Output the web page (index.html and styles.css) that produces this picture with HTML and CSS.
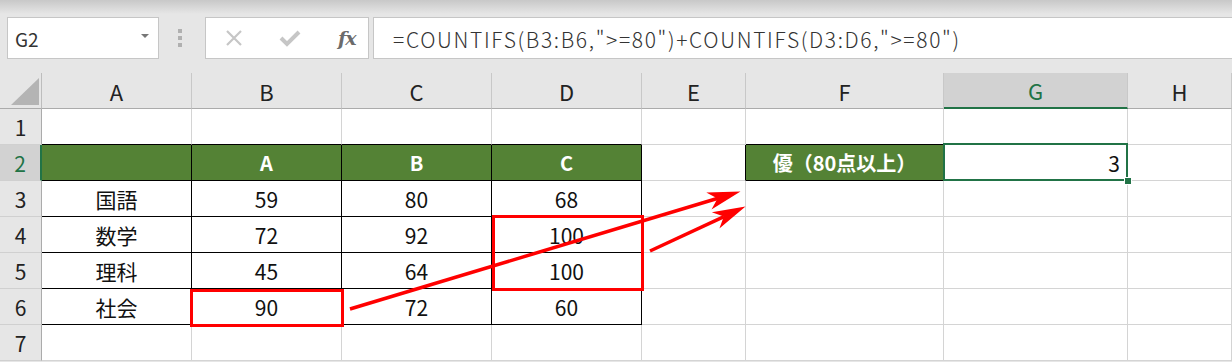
FILE: index.html
```html
<!DOCTYPE html>
<html lang="ja">

<head>
  <meta charset="utf-8">
  <title>COUNTIFS - 80点以上</title>
  <link rel="stylesheet" href="styles.css">
</head>

<body>
  <div class="app">
    <div class="topbar"></div>

    <div class="formula-bar">
      <div class="name-box">
        <span>G2</span>
        <span class="drop"></span>
      </div>
      <div class="grip"><i></i><i></i><i></i></div>
      <div class="fx-box">
        <svg class="ico" width="20" height="20" viewBox="0 0 20 20">
          <path d="M3 3 L17 17 M17 3 L3 17" stroke="#c6c6c6" stroke-width="2.2" fill="none" />
        </svg>
        <svg class="ico" width="22" height="20" viewBox="0 0 22 20">
          <path d="M2 10 L8 16 L20 4" stroke="#c6c6c6" stroke-width="4" fill="none" />
        </svg>
        <span class="fx">fx</span>
      </div>
      <div class="formula">=COUNTIFS(B3:B6,"&gt;=80")+COUNTIFS(D3:D6,"&gt;=80")</div>
    </div>

    <div class="sheet">
      <!-- header row -->
      <div class="corner"><span class="tri"></span></div>
      <div class="ch">A</div>
      <div class="ch">B</div>
      <div class="ch">C</div>
      <div class="ch">D</div>
      <div class="ch">E</div>
      <div class="ch">F</div>
      <div class="ch sel">G</div>
      <div class="ch">H</div>

      <!-- row 1 -->
      <div class="rh">1</div>
      <div class="c top"></div>
      <div class="c top"></div>
      <div class="c top"></div>
      <div class="c top"></div>
      <div class="c"></div>
      <div class="c top"></div>
      <div class="c"></div>
      <div class="c"></div>

      <!-- row 2 -->
      <div class="rh sel">2</div>
      <div class="c tb hd"></div>
      <div class="c tb hd">A</div>
      <div class="c tb hd">B</div>
      <div class="c tb hd">C</div>
      <div class="c left"></div>
      <div class="c tb hd">優（80点以上）</div>
      <div class="c num active">3<span class="handle"></span></div>
      <div class="c"></div>

      <!-- row 3 -->
      <div class="rh">3</div>
      <div class="c tb">国語</div>
      <div class="c tb">59</div>
      <div class="c tb">80</div>
      <div class="c tb">68</div>
      <div class="c"></div>
      <div class="c"></div>
      <div class="c"></div>
      <div class="c"></div>

      <!-- row 4 -->
      <div class="rh">4</div>
      <div class="c tb">数学</div>
      <div class="c tb">72</div>
      <div class="c tb">92</div>
      <div class="c tb">100</div>
      <div class="c"></div>
      <div class="c"></div>
      <div class="c"></div>
      <div class="c"></div>

      <!-- row 5 -->
      <div class="rh">5</div>
      <div class="c tb">理科</div>
      <div class="c tb">45</div>
      <div class="c tb">64</div>
      <div class="c tb">100</div>
      <div class="c"></div>
      <div class="c"></div>
      <div class="c"></div>
      <div class="c"></div>

      <!-- row 6 -->
      <div class="rh">6</div>
      <div class="c tb">社会</div>
      <div class="c tb">90</div>
      <div class="c tb">72</div>
      <div class="c tb">60</div>
      <div class="c"></div>
      <div class="c"></div>
      <div class="c"></div>
      <div class="c"></div>

      <!-- row 7 -->
      <div class="rh">7</div>
      <div class="c"></div>
      <div class="c"></div>
      <div class="c"></div>
      <div class="c"></div>
      <div class="c"></div>
      <div class="c"></div>
      <div class="c"></div>
      <div class="c"></div>
    </div>

    <!-- red annotations drawn over the sheet -->
    <svg class="marks" width="1232" height="362" viewBox="0 0 1232 362">
      <rect x="191.5" y="290.5" width="151" height="35" fill="none" stroke="#ff0000" stroke-width="3" />
      <rect x="493.5" y="216.5" width="149" height="73" fill="none" stroke="#ff0000" stroke-width="3" />

      <line x1="350" y1="309" x2="718" y2="198.3" stroke="#ff0000" stroke-width="3.5" />
      <polygon points="740.5,191.5 711.5,209.6 717.5,198.4 706.3,192.4" fill="#ff0000" />

      <line x1="650" y1="251" x2="724" y2="216.6" stroke="#ff0000" stroke-width="3.5" />
      <polygon points="745.5,206.5 719.4,228.6 723.8,216.6 711.8,212.2" fill="#ff0000" />
    </svg>
  </div>
</body>

</html>
```

FILE: styles.css
```css
* {
  box-sizing: border-box;
}

body {
  margin: 0;
  font-family: "Noto Sans CJK JP", "Noto Sans", sans-serif;
  background-color: #e6e6e6;
}

.app {
  position: relative;
  width: 1232px;
  height: 362px;
  overflow: hidden;
}

.topbar {
  height: 14px;
  background: linear-gradient(#c8c8c8, #e6e6e6);
}

/* formula bar */

.formula-bar {
  display: flex;
  align-items: stretch;
  height: 42px;
  margin-top: 3px;
  margin-bottom: 14px;
  padding-left: 7px;
}

.name-box {
  display: flex;
  align-items: center;
  justify-content: space-between;
  width: 152px;
  padding: 0 9px 0 7px;
  background-color: #fff;
  border: 1px solid #c6c6c6;
  font-size: 19px;
  color: #333;
}

.drop {
  width: 0;
  height: 0;
  border-left: 4px solid transparent;
  border-right: 4px solid transparent;
  border-top: 4px solid #777;
  margin-bottom: 4px;
}

.grip {
  display: flex;
  flex-direction: column;
  justify-content: center;
  gap: 3px;
  width: 46px;
  padding-left: 19px;
}

.grip i {
  width: 4px;
  height: 4px;
  background-color: #b0b0b0;
}

.fx-box {
  display: flex;
  align-items: center;
  width: 164px;
  padding-left: 18px;
  gap: 35px;
  background-color: #fff;
  border: 1px solid #c6c6c6;
}

.fx {
  font-family: "DejaVu Serif", "Liberation Serif", serif;
  font-style: italic;
  font-weight: bold;
  font-size: 19px;
  color: #6b6b6b;
  letter-spacing: -1px;
  margin-left: 2px;
}

.formula {
  flex: 1;
  margin-left: 4px;
  padding-left: 19px;
  padding-top: 2px;
  display: flex;
  align-items: center;
  background-color: #fff;
  border: 1px solid #c6c6c6;
  border-right: none;
  font-size: 21px;
  font-weight: 300;
  letter-spacing: 1.65px;
  color: #333;
}

/* grid of cells */

.sheet {
  display: grid;
  grid-template-columns: 42px 150px 150px 150px 150px 104px 198px 184px 104px;
  grid-template-rows: repeat(8, 36px);
  background-color: #fff;
}

.corner {
  position: relative;
  background-color: #e6e6e6;
  border-right: 1px solid #bdbdbd;
  border-bottom: 1px solid #ababab;
}

.tri {
  position: absolute;
  left: 11px;
  top: 5px;
  width: 0;
  height: 0;
  border-left: 28px solid transparent;
  border-bottom: 27px solid #b4b4b4;
}

.ch {
  display: flex;
  align-items: center;
  justify-content: center;
  background-color: #e6e6e6;
  border-right: 1px solid #c8c8c8;
  border-bottom: 1px solid #ababab;
  font-size: 22px;
  color: #222;
}

.ch.sel {
  background-color: #d2d2d2;
  border-bottom: 2px solid #217346;
  color: #217346;
}

.rh {
  display: flex;
  align-items: center;
  justify-content: center;
  background-color: #e6e6e6;
  border-right: 1px solid #ababab;
  border-bottom: 1px solid #d0d0d0;
  font-size: 21px;
  color: #222;
}

.rh.sel {
  background-color: #d2d2d2;
  border-right: 2px solid #217346;
  color: #217346;
}

.c {
  display: flex;
  align-items: center;
  justify-content: center;
  border-right: 1px solid #d4d4d4;
  border-bottom: 1px solid #d4d4d4;
  font-size: 21px;
  color: #111;
}

.c.top {
  border-bottom-color: #000;
}

.c.left {
  border-right-color: #000;
}

.c.tb {
  border-right-color: #000;
  border-bottom-color: #000;
}

.c.hd {
  background-color: #548235;
  color: #fff;
  font-weight: bold;
  font-size: 20px;
}

.c.num {
  justify-content: flex-end;
  padding-right: 7px;
}

.active {
  position: relative;
}

.active::after {
  content: "";
  position: absolute;
  top: -2px;
  left: -1px;
  right: -1px;
  bottom: -1px;
  border: 2px solid #217346;
}

.handle {
  position: absolute;
  right: -5px;
  bottom: -5px;
  width: 8px;
  height: 8px;
  background-color: #217346;
  border: 1px solid #fff;
  z-index: 1;
}

.marks {
  position: absolute;
  top: 0;
  left: 0;
  pointer-events: none;
}
```
